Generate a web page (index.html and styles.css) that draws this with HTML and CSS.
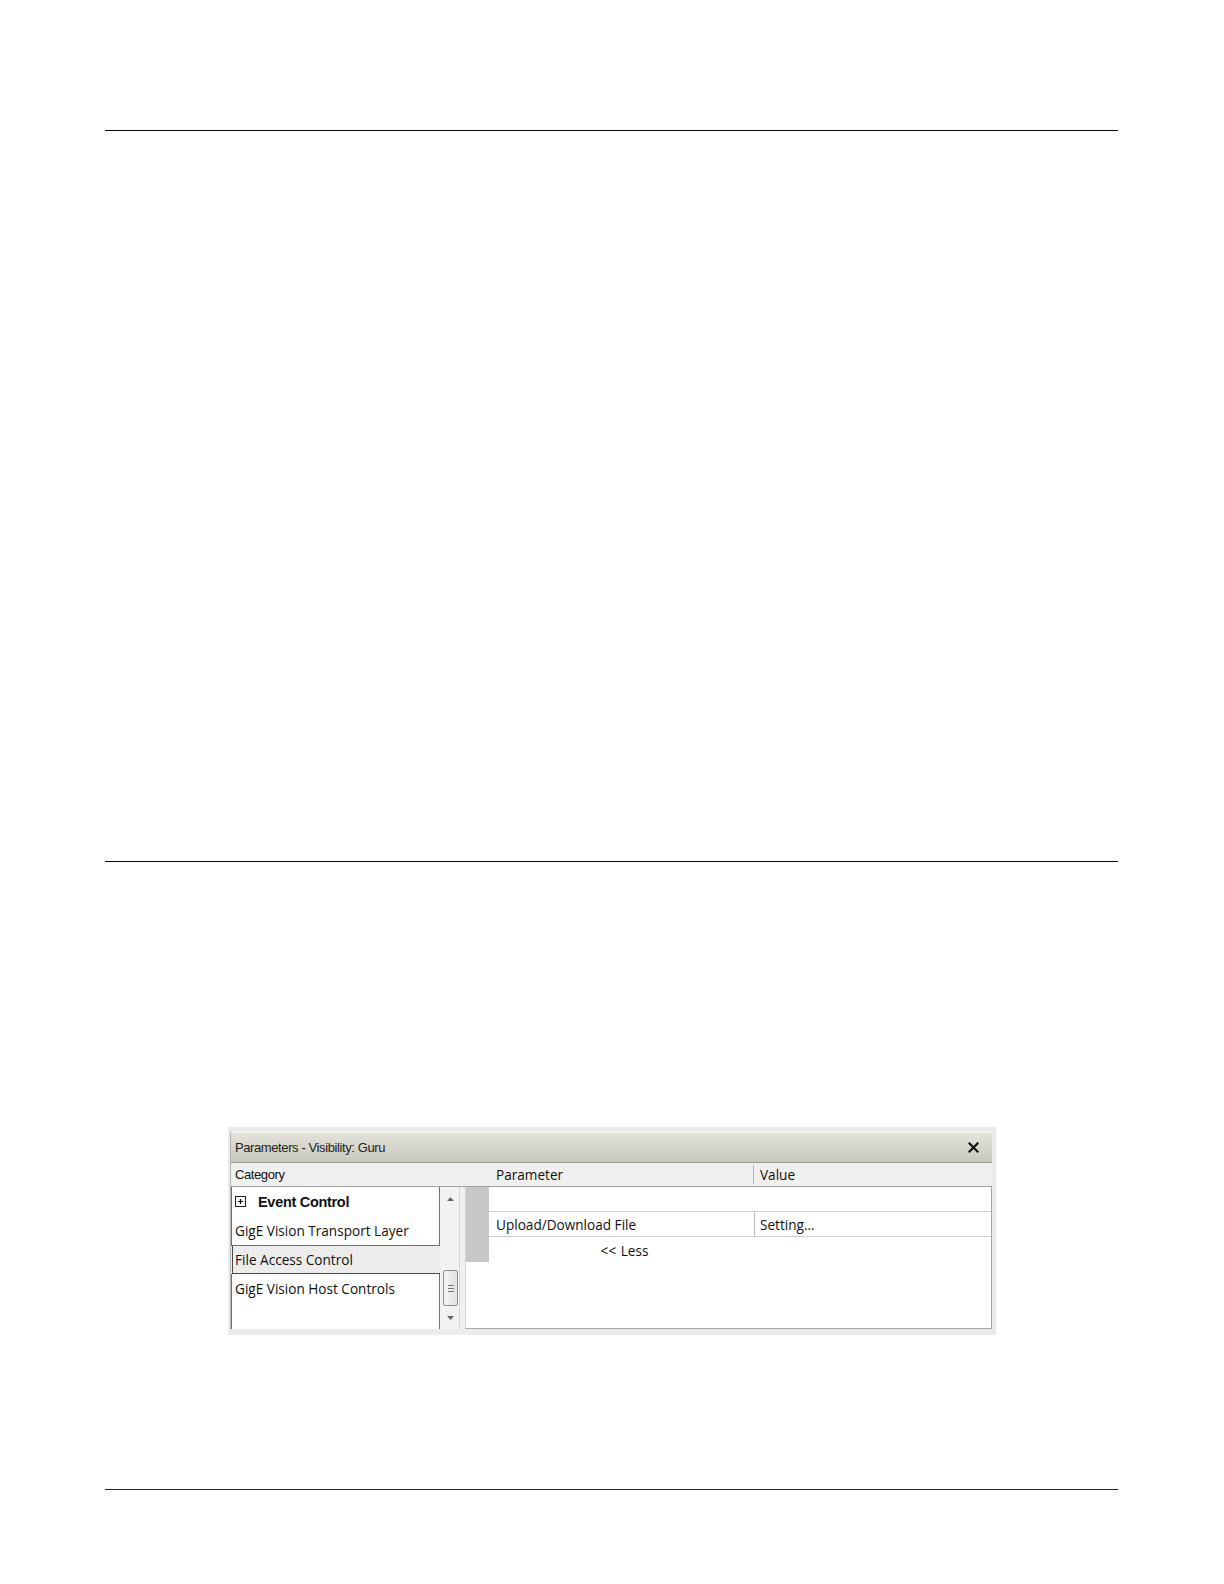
FILE: index.html
```html
<!DOCTYPE html>
<html>
<head>
<meta charset="utf-8">
<link rel="stylesheet" href="styles.css">
</head>
<body>
<div class="page">
  <div class="rule rule-1"></div>
  <div class="rule rule-2"></div>
  <div class="dialog">
    <div class="window">
      <div class="titlebar">
        <span class="title">Parameters - Visibility: Guru</span>
        <svg class="close" width="11" height="11" viewBox="0 0 11 11"><path d="M1.5 1.5 L9.5 9.5 M9.5 1.5 L1.5 9.5" stroke="#111" stroke-width="2.2" stroke-linecap="square"/></svg>
      </div>
      <div class="headers">
        <div class="h-cat">Category</div>
        <div class="h-param">Parameter</div>
        <div class="h-value">Value</div>
      </div>
      <div class="body">
        <div class="list">
          <div class="box box-top">
            <div class="item item-bold">
              <svg class="expander" width="11" height="11" viewBox="0 0 11 11"><rect x="0.5" y="0.5" width="10" height="10" fill="#fff" stroke="#222"/><path d="M3 5.5 H8 M5.5 3 V8" stroke="#111" stroke-width="1.2"/></svg>
              <span>Event Control</span>
            </div>
            <div class="item">GigE Vision Transport Layer</div>
          </div>
          <div class="item item-selected">File Access Control</div>
          <div class="box box-bottom">
            <div class="item">GigE Vision Host Controls</div>
          </div>
        </div>
        <div class="scrollbar">
          <svg class="arrow" width="7" height="4" viewBox="0 0 7 4"><path d="M0 4 L3.5 0 L7 4 Z" fill="#666"/></svg>
          <div class="track"></div>
          <div class="thumb">
            <svg width="6" height="7" viewBox="0 0 6 7"><path d="M0 0.5 H6 M0 3.5 H6 M0 6.5 H6" stroke="#777" stroke-width="1"/></svg>
          </div>
          <svg class="arrow" width="7" height="4" viewBox="0 0 7 4"><path d="M0 0 L7 0 L3.5 4 Z" fill="#666"/></svg>
        </div>
        <div class="splitter"></div>
        <div class="grid">
          <div class="row">
            <div class="strip"></div>
            <div class="cells cells-line">
              <div class="c-param"></div>
              <div class="c-value c-empty"></div>
            </div>
          </div>
          <div class="row">
            <div class="strip"></div>
            <div class="cells cells-line">
              <div class="c-param">Upload/Download File</div>
              <div class="c-value c-div">Setting...</div>
            </div>
          </div>
          <div class="row">
            <div class="strip"></div>
            <div class="cells">
              <div class="c-param c-less">&lt;&lt; Less</div>
            </div>
          </div>
          <div class="rest"></div>
        </div>
      </div>
    </div>
  </div>
  <div class="rule rule-3"></div>
</div>
</body>
</html>
```
FILE: styles.css
```css
html, body {
  margin: 0;
  padding: 0;
  background: #ffffff;
}

.page {
  margin-left: 105px;
  width: 1013px;
  padding-top: 130px;
  font-family: "Open Sans", "Liberation Sans", sans-serif;
  color: #111;
}

.rule {
  height: 1px;
  background: #000;
}

.rule-2 {
  margin-top: 730px;
}

.rule-3 {
  margin-top: 154px;
  background: #222;
}

.dialog {
  margin-top: 265px;
  margin-left: 123px;
  width: 768px;
  height: 208px;
  box-sizing: border-box;
  padding: 5px 4px 6px 2px;
  background: #ebebeb;
  display: flex;
  flex-direction: column;
}

.window {
  flex: 1;
  display: flex;
  flex-direction: column;
  background: #f0f0f0;
  border-left: 1px solid #b4b4b4;
}

.titlebar {
  height: 29px;
  display: flex;
  align-items: center;
  justify-content: space-between;
  padding: 0 13px 0 4px;
  background: linear-gradient(#e3e3db, #c8c8bc);
  border-top: 1px solid #f5f5f2;
  border-bottom: 1px solid #9c9c92;
}

.title {
  font-family: "Liberation Sans", Arial, sans-serif;
  font-size: 13px;
  letter-spacing: -0.4px;
  color: #222;
}

.headers {
  height: 23px;
  display: flex;
  align-items: center;
  background: #f0f0f0;
  border-bottom: 1px solid #a2a2a2;
  font-size: 13.6px;
}

.h-cat {
  width: 258px;
  box-sizing: border-box;
  padding-left: 4px;
  font-family: "Liberation Sans", Arial, sans-serif;
  font-size: 13px;
  letter-spacing: -0.4px;
}

.h-param {
  width: 265px;
  box-sizing: border-box;
  padding-left: 7px;
  height: 19px;
  line-height: 19px;
  border-right: 1px solid #b8b8b8;
}

.h-value {
  padding-left: 6px;
}

.body {
  flex: 1;
  display: flex;
  background: #f0f0f0;
}

.list {
  width: 209px;
  display: flex;
  flex-direction: column;
  font-size: 13.6px;
}

.box {
  background: #fff;
  border: 1px solid #6e6e6e;
  border-top: none;
}

.box-bottom {
  flex: 1;
  border-top: none;
  border-bottom: none;
}

.item {
  height: 29px;
  display: flex;
  align-items: center;
  padding-left: 3px;
  white-space: nowrap;
}

.item-bold {
  font-family: "Liberation Sans", Arial, sans-serif;
  font-weight: bold;
  font-size: 14.5px;
  letter-spacing: -0.3px;
  gap: 12px;
}

.expander {
  flex: none;
}

.item-selected {
  height: 27px;
  background: #ececec;
  border: 1px solid #4a4a4a;
  border-top: none;
  margin-left: 1px;
  margin-right: -1px;
  padding-left: 2px;
}

.scrollbar {
  width: 20px;
  display: flex;
  flex-direction: column;
  align-items: center;
  background: #f2f2f2;
  border-right: 1px solid #d4d4d4;
  box-sizing: border-box;
  padding: 10px 0 9px 1px;
}

.arrow {
  flex: none;
}

.track {
  flex: 1;
}

.thumb {
  width: 15px;
  height: 36px;
  margin: 0 0 10px 1px;
  box-sizing: border-box;
  border: 1px solid #8e8f8f;
  border-radius: 2px;
  background: linear-gradient(90deg, #f4f4f4, #e0e0e0);
  display: flex;
  align-items: center;
  justify-content: center;
}

.splitter {
  width: 5px;
  background: #f0f0f0;
}

.grid {
  flex: 1;
  display: flex;
  flex-direction: column;
  background: #fff;
  border-right: 1px solid #a8a8a8;
  border-bottom: 1px solid #a8a8a8;
  border-left: 1px solid #d6d6d6;
  font-size: 13.6px;
}

.row {
  display: flex;
  height: 25px;
}

.strip {
  width: 23px;
  background: #c8c8c8;
  flex: none;
}

.cells {
  flex: 1;
  display: flex;
  align-items: center;
}

.cells-line {
  border-bottom: 1px solid #cdcdcd;
}

.c-param {
  width: 265px;
  box-sizing: border-box;
  padding-left: 7px;
  height: 100%;
  display: flex;
  align-items: center;
  white-space: nowrap;
}

.c-value {
  padding-left: 5px;
  height: 100%;
  display: flex;
  align-items: center;
}

.c-div {
  border-left: 1px solid #b8b8b8;
}

.c-less {
  justify-content: center;
  padding-left: 6px;
  padding-top: 2px;
  box-sizing: border-box;
  word-spacing: 1px;
}

.rest {
  flex: 1;
}
```
